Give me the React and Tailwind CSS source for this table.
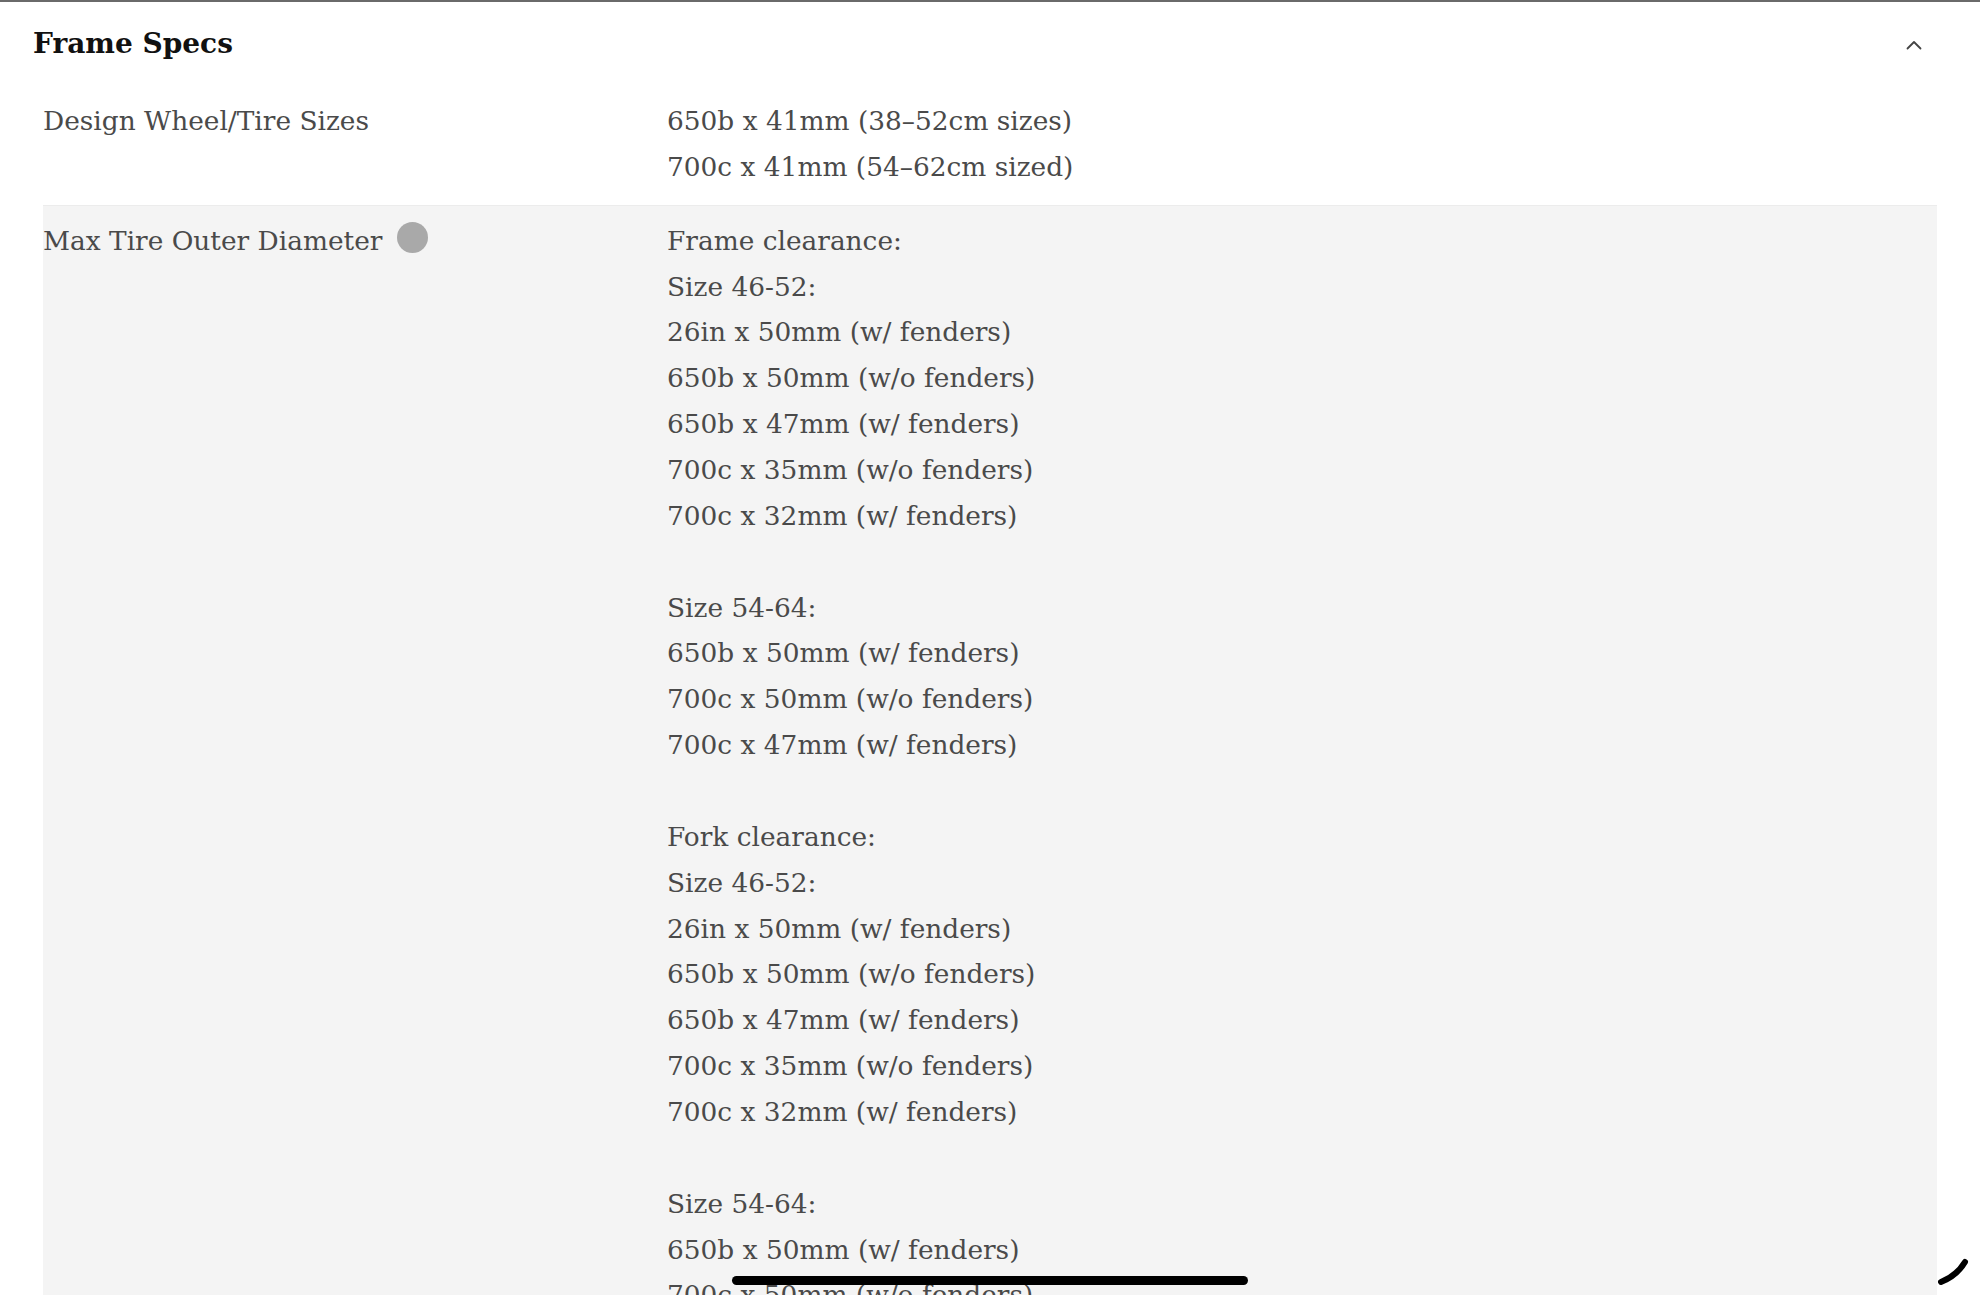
import React from "react";

const maxTire = [
  "Frame clearance:",
  "Size 46-52:",
  "26in x 50mm (w/ fenders)",
  "650b x 50mm (w/o fenders)",
  "650b x 47mm (w/ fenders)",
  "700c x 35mm (w/o fenders)",
  "700c x 32mm (w/ fenders)",
  "",
  "Size 54-64:",
  "650b x 50mm (w/ fenders)",
  "700c x 50mm (w/o fenders)",
  "700c x 47mm (w/ fenders)",
  "",
  "Fork clearance:",
  "Size 46-52:",
  "26in x 50mm (w/ fenders)",
  "650b x 50mm (w/o fenders)",
  "650b x 47mm (w/ fenders)",
  "700c x 35mm (w/o fenders)",
  "700c x 32mm (w/ fenders)",
  "",
  "Size 54-64:",
  "650b x 50mm (w/ fenders)",
  "700c x 50mm (w/o fenders)",
  "700c x 47mm (w/ fenders)",
];

function Lines({ items }) {
  return (
    <div className="flex flex-col">
      {items.map((t, i) => (
        <div key={i} className="h-[45.86px] leading-[45.86px] whitespace-pre">
          {t || "\u00a0"}
        </div>
      ))}
    </div>
  );
}

export default function App() {
  return (
    <div
      className="relative w-[1980px] h-[1295px] overflow-hidden bg-white text-[#4a4a4a]"
      style={{ fontFamily: '"DejaVu Serif", serif' }}
    >
      <div className="border-t-2 border-[#6a6a6a]" />
      <div className="flex items-center justify-between h-[84px] pl-[33px] pr-[58px]">
        <h2 className="text-[28px] font-bold text-[#111]">Frame Specs</h2>
        <svg width="16" height="10" viewBox="0 0 16 10" fill="none" className="mt-[2px]">
          <path d="M1.5 8.5 L8 2 L14.5 8.5" stroke="#444" strokeWidth="1.8" strokeLinecap="round" strokeLinejoin="round" />
        </svg>
      </div>
      <div className="mx-[43px] w-[1894px] text-[26.4px]">
        <div className="flex pt-[12px] pb-[15px] border-b border-[#ececec]">
          <div className="w-[624px] h-[45.86px] leading-[45.86px]">Design Wheel/Tire Sizes</div>
          <Lines items={["650b x 41mm (38–52cm sizes)", "700c x 41mm (54–62cm sized)"]} />
        </div>
        <div className="flex pt-[12px] bg-[#f4f4f4]">
          <div className="w-[624px] flex items-start">
            <span className="h-[45.86px] leading-[45.86px]">Max Tire Outer Diameter</span>
            <span className="ml-[15px] mt-[4px] w-[31px] h-[31px] rounded-full bg-[#a9a9a9]" />
          </div>
          <Lines items={maxTire} />
        </div>
      </div>
      <div className="absolute left-[732px] top-[1276px] w-[516px] h-[9px] rounded-full bg-black" />
      <svg className="absolute left-[1937px] top-[1254px]" width="34" height="32" viewBox="0 0 34 32" fill="none">
        <path d="M4 28 C 14 24, 22 18, 28 8" stroke="#000" strokeWidth="6" strokeLinecap="round" />
      </svg>
    </div>
  );
}
